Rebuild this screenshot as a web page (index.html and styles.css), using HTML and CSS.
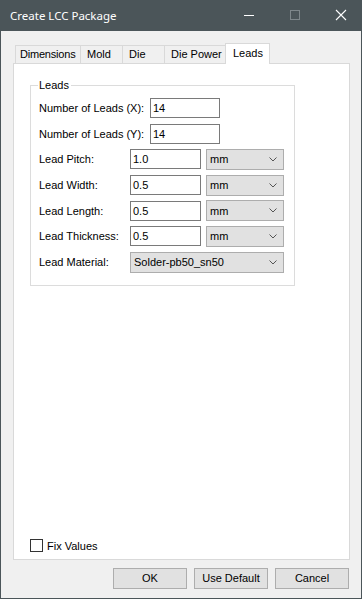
FILE: index.html
```html
<!DOCTYPE html>
<html>
<head>
<meta charset="utf-8">
<link rel="stylesheet" href="styles.css">
</head>
<body>
<div class="window">
  <div class="titlebar">
    <span class="title">Create LCC Package</span>
    <div class="caption-buttons">
      <svg class="cap" width="46" height="31" viewBox="0 0 46 31"><line x1="18" y1="15.5" x2="28" y2="15.5" stroke="#ffffff" stroke-width="1"/></svg>
      <svg class="cap" width="46" height="31" viewBox="0 0 46 31"><rect x="18.5" y="10.5" width="9" height="9" fill="none" stroke="#7e878b" stroke-width="1"/></svg>
      <svg class="cap" width="46" height="31" viewBox="0 0 46 31"><path d="M18 10 L28 20 M28 10 L18 20" stroke="#ffffff" stroke-width="1.1"/></svg>
    </div>
  </div>
  <div class="body">
    <div class="tabs">
      <div class="tab w-dim">Dimensions</div>
      <div class="tab w-mold">Mold</div>
      <div class="tab w-die">Die</div>
      <div class="tab w-power">Die Power</div>
      <div class="tab tab-active w-leads">Leads</div>
    </div>
    <div class="panel">
      <div class="group">
        <span class="group-title">Leads</span>
        <div class="row">
          <span class="label label-wide">Number of Leads (X):</span>
          <div class="textbox tb-short">14</div>
        </div>
        <div class="row">
          <span class="label label-wide">Number of Leads (Y):</span>
          <div class="textbox tb-short">14</div>
        </div>
        <div class="row">
          <span class="label">Lead Pitch:</span>
          <div class="textbox">1.0</div>
          <div class="combo"><span>mm</span><svg width="8" height="5" viewBox="0 0 8 5"><polyline points="0.5,0.5 4,4 7.5,0.5" fill="none" stroke="#555" stroke-width="1"/></svg></div>
        </div>
        <div class="row">
          <span class="label">Lead Width:</span>
          <div class="textbox">0.5</div>
          <div class="combo"><span>mm</span><svg width="8" height="5" viewBox="0 0 8 5"><polyline points="0.5,0.5 4,4 7.5,0.5" fill="none" stroke="#555" stroke-width="1"/></svg></div>
        </div>
        <div class="row">
          <span class="label">Lead Length:</span>
          <div class="textbox">0.5</div>
          <div class="combo"><span>mm</span><svg width="8" height="5" viewBox="0 0 8 5"><polyline points="0.5,0.5 4,4 7.5,0.5" fill="none" stroke="#555" stroke-width="1"/></svg></div>
        </div>
        <div class="row">
          <span class="label">Lead Thickness:</span>
          <div class="textbox">0.5</div>
          <div class="combo"><span>mm</span><svg width="8" height="5" viewBox="0 0 8 5"><polyline points="0.5,0.5 4,4 7.5,0.5" fill="none" stroke="#555" stroke-width="1"/></svg></div>
        </div>
        <div class="row">
          <span class="label">Lead Material:</span>
          <div class="combo combo-wide"><span>Solder-pb50_sn50</span><svg width="8" height="5" viewBox="0 0 8 5"><polyline points="0.5,0.5 4,4 7.5,0.5" fill="none" stroke="#555" stroke-width="1"/></svg></div>
        </div>
      </div>
      <div class="check-row">
        <span class="checkbox"></span>
        <span class="check-label">Fix Values</span>
      </div>
    </div>
    <div class="buttons">
      <div class="btn">OK</div>
      <div class="btn">Use Default</div>
      <div class="btn">Cancel</div>
    </div>
  </div>
</div>
</body>
</html>
```
FILE: styles.css
```css
html, body {
  margin: 0;
  padding: 0;
}
body {
  width: 362px;
  height: 599px;
  overflow: hidden;
  font-family: "Liberation Sans", Arial, sans-serif;
  font-size: 11px;
  color: #000;
}
.window {
  box-sizing: border-box;
  width: 362px;
  height: 599px;
  border: 1px solid #4b5559;
  border-top: none;
  background: #f0f0f0;
  display: flex;
  flex-direction: column;
}
.titlebar {
  height: 31px;
  background: #4b5559;
  margin: 0 -1px;
  display: flex;
  align-items: center;
  justify-content: space-between;
}
.title {
  font-family: "Noto Sans", "Open Sans", sans-serif;
  font-size: 11.5px;
  color: #ffffff;
  padding-left: 10px;
  padding-bottom: 1px;
}
.caption-buttons {
  display: flex;
  margin-right: -2px;
}
.cap {
  display: block;
}
.body {
  flex: 1;
  display: flex;
  flex-direction: column;
}
.tabs {
  display: flex;
  align-items: flex-end;
  height: 21px;
  margin: 12px 0 -1px 15px;
  position: relative;
  z-index: 1;
}
.tab {
  box-sizing: border-box;
  height: 18px;
  margin-bottom: 1px;
  margin-left: -1px;
  border: 1px solid #d9d9d9;
  border-bottom: none;
  background: #f0f0f0;
  padding-left: 6px;
  line-height: 17px;
  white-space: nowrap;
}
.tab-active {
  height: 21px;
  margin-bottom: 0;
  background: #ffffff;
  line-height: 19px;
  padding-left: 7px;
}
.w-dim { width: 66px; padding-left: 4px; letter-spacing: -0.2px; }
.w-mold { width: 43px; }
.w-die { width: 43px; }
.w-power { width: 62px; }
.w-leads { width: 45px; }
.panel {
  box-sizing: border-box;
  width: 337px;
  height: 497px;
  margin-left: 12px;
  background: #ffffff;
  border: 1px solid #d9d9d9;
  padding: 21px 0 6px 16px;
  display: flex;
  flex-direction: column;
}
.group {
  box-sizing: border-box;
  width: 265px;
  border: 1px solid #dcdcdc;
  position: relative;
  padding: 12px 0 13px 8px;
  display: flex;
  flex-direction: column;
  gap: 5.7px;
}
.group-title {
  position: absolute;
  top: -7px;
  left: 7px;
  background: #ffffff;
  padding: 0 2px 0 1px;
  line-height: 13px;
}
.row {
  display: flex;
  align-items: center;
  height: 20px;
}
.label {
  width: 91px;
  flex: none;
  white-space: nowrap;
}
.label-wide {
  width: 111px;
}
.textbox {
  box-sizing: border-box;
  width: 71px;
  height: 20px;
  border: 1px solid #7a7a7a;
  background: #ffffff;
  padding-left: 2px;
  line-height: 18px;
  flex: none;
}
.tb-short {
  width: 70px;
}
.combo {
  box-sizing: border-box;
  width: 78px;
  height: 21px;
  margin-left: 5px;
  border: 1px solid #adadad;
  background: #e1e1e1;
  display: flex;
  align-items: center;
  justify-content: space-between;
  padding: 0 6px 0 3px;
  flex: none;
}
.combo svg {
  display: block;
}
.combo-wide {
  width: 154px;
  margin-left: 0;
}
.check-row {
  margin-top: auto;
  display: flex;
  align-items: center;
  height: 15px;
}
.checkbox {
  box-sizing: border-box;
  width: 13px;
  height: 13px;
  border: 1px solid #333333;
  background: #ffffff;
}
.check-label {
  margin-left: 4px;
}
.buttons {
  display: flex;
  justify-content: flex-end;
  gap: 7px;
  margin: 8px 12px 0 0;
}
.btn {
  box-sizing: border-box;
  width: 74px;
  height: 21px;
  border: 1px solid #adadad;
  background: #e1e1e1;
  text-align: center;
  line-height: 19px;
}
```
